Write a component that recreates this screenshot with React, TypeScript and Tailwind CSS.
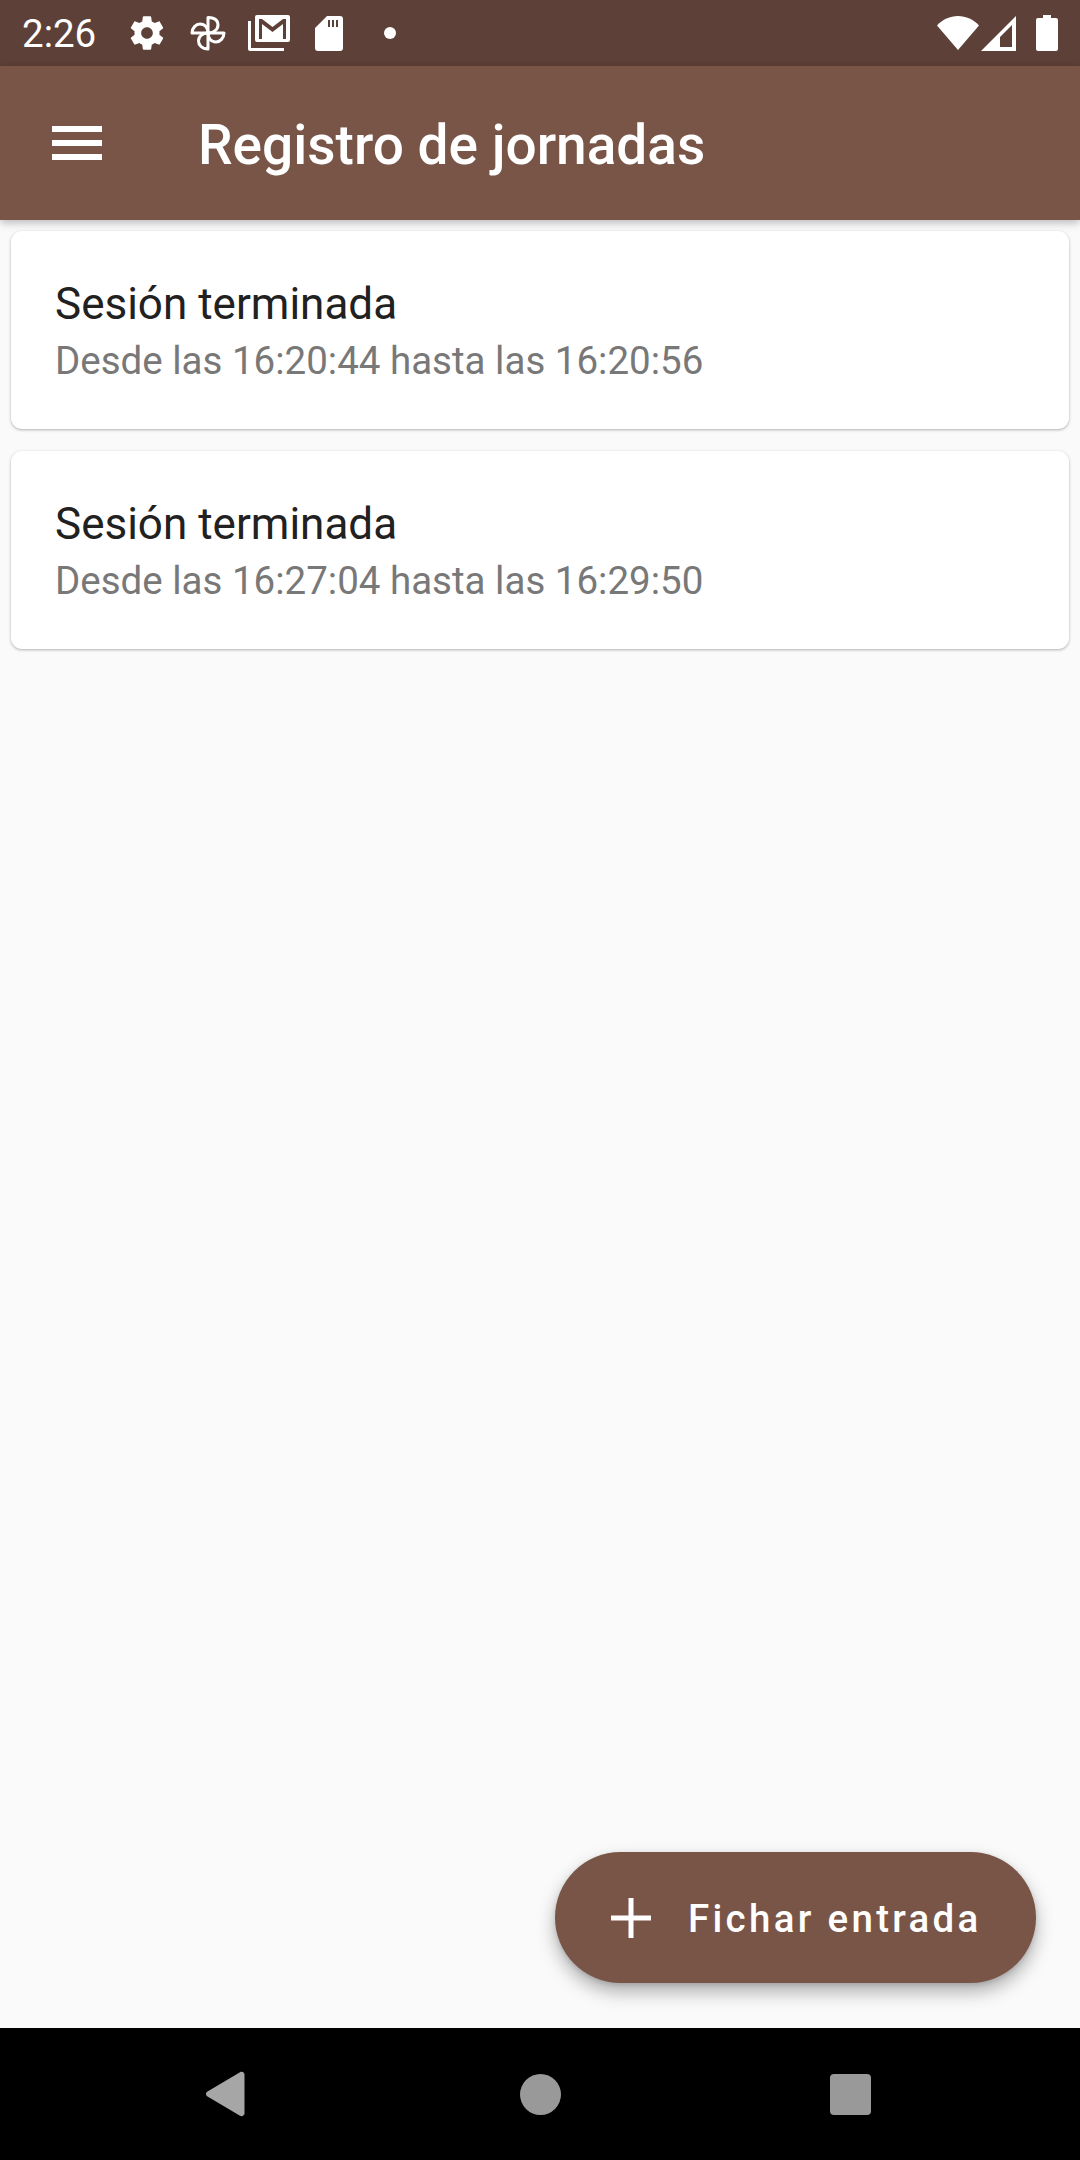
import React from "react";

const roboto = "font-['Roboto',sans-serif]";

function Gear() {
  return (
    <svg width="40" height="40" viewBox="0 0 24 24" fill="#fff" className="shrink-0">
      <path fillRule="evenodd" d="M19.43 12.98c.04-.32.07-.64.07-.98s-.03-.66-.07-.98l2.11-1.65c.19-.15.24-.42.12-.64l-2-3.46c-.12-.22-.39-.3-.61-.22l-2.49 1c-.52-.4-1.08-.73-1.69-.98l-.38-2.65C14.46 2.18 14.25 2 14 2h-4c-.25 0-.46.18-.49.42l-.38 2.65c-.61.25-1.17.59-1.69.98l-2.49-1c-.23-.09-.49 0-.61.22l-2 3.46c-.13.22-.07.49.12.64l2.11 1.65c-.04.32-.07.65-.07.98s.03.66.07.98l-2.11 1.65c-.19.15-.24.42-.12.64l2 3.46c.12.22.39.3.61.22l2.49-1c.52.4 1.08.73 1.69.98l.38 2.65c.03.24.24.42.49.42h4c.25 0 .46-.18.49-.42l.38-2.65c.61-.25 1.17-.59 1.69-.98l2.49 1c.23.09.49 0 .61-.22l2-3.46c.12-.22.07-.49-.12-.64l-2.11-1.65zM12 15.500c-1.93 0-3.5-1.57-3.5-3.5s1.57-3.5 3.5-3.5 3.5 1.57 3.5 3.5-1.57 3.5-3.5 3.5z" />
    </svg>
  );
}

function Fan() {
  return (
    <svg width="36" height="36" viewBox="0 0 36 36" fill="none" stroke="#fff" strokeWidth="3" strokeLinejoin="round" className="shrink-0">
      <path d="M18 18V2.500C18 2.500 28 2 28 10C28 15 23 18 18 18Z" />
      <path d="M18 18H34C34 23 30 27 26 27C21 27 18 23 18 18Z" />
      <path d="M18 18V34C12 34 8.500 30 8.500 26C8.500 21 13 18 18 18Z" />
      <path d="M18 18H2C2 13 6 9 10 9C15 9 18 13 18 18Z" />
    </svg>
  );
}

function Gmail() {
  return (
    <svg width="42" height="36" viewBox="0 0 42 36" className="shrink-0">
      <path d="M0 6h3v27h33v3H2a2 2 0 0 1-2-2Z" fill="#fff" />
      <path fillRule="evenodd" d="M9 0h31a2 2 0 0 1 2 2v23a2 2 0 0 1-2 2H9a2 2 0 0 1-2-2V2a2 2 0 0 1 2-2Zm2 4v20h3V9l10.500 8L35 9v15h3V4h-3L24.500 12 14 4Z" fill="#fff" />
    </svg>
  );
}

function Sd() {
  return (
    <svg width="28" height="35" viewBox="0 0 28 35" className="shrink-0">
      <path fillRule="evenodd" d="M12 0h13a3 3 0 0 1 3 3v29a3 3 0 0 1-3 3H3a3 3 0 0 1-3-3V12ZM13 4v7h2V4Zm4 0v7h2V4Zm4 0v7h2V4Z" fill="#fff" />
    </svg>
  );
}

function Wifi() {
  return (
    <svg width="42" height="34" viewBox="0 0 42 34" className="shrink-0">
      <path d="M0 9.500C5.500 3.500 13 0 21 0s15.500 3.500 21 9.500L21 34Z" fill="#fff" />
    </svg>
  );
}

function Signal() {
  return (
    <svg width="35" height="35" viewBox="0 0 35 35" className="shrink-0">
      <path fillRule="evenodd" d="M35 0v35H0ZM32 8 19 21v10h13Z" fill="#fff" />
      <path d="M32 7.500V31h-1V8.500Z" fill="#fff" />
    </svg>
  );
}

function Battery() {
  return (
    <svg width="22" height="36" viewBox="0 0 22 36" className="shrink-0">
      <path d="M7 0h8v3h5a2 2 0 0 1 2 2v29a2 2 0 0 1-2 2H2a2 2 0 0 1-2-2V5a2 2 0 0 1 2-2h5Z" fill="#fff" />
    </svg>
  );
}

function Card({ range }: { range: string }) {
  return (
    <div className="h-[198px] rounded-[11px] bg-white px-[44px] pt-[44px] shadow-[0_1px_3px_rgba(0,0,0,0.3)]">
      <div className="h-[60px] text-[44px] leading-[58px] text-[#212121]">Sesión terminada</div>
      <div className="h-[52px] text-[38.500px] leading-[52px] text-[#787878]">{range}</div>
    </div>
  );
}

export default function App() {
  return (
    <div className={`${roboto} flex h-[2160px] w-[1080px] flex-col overflow-hidden bg-[#fafafa]`}>
      <div className="flex h-[66px] shrink-0 items-center bg-[#5d4037] pl-[22px] pr-[22px] text-white">
        <span className="mt-[1px] w-[105px] text-[38.500px] leading-[66px]">2:26</span>
        <Gear />
        <span className="w-[23px]" />
        <Fan />
        <span className="w-[22px]" />
        <Gmail />
        <span className="w-[25px]" />
        <Sd />
        <span className="ml-[41px] h-[12px] w-[12px] rounded-full bg-white" />
        <div className="ml-auto flex items-center">
          <Wifi />
          <span className="w-[2px]" />
          <Signal />
          <span className="w-[20px]" />
          <Battery />
        </div>
      </div>

      <header className="z-10 flex h-[154px] shrink-0 items-center bg-[#795548] pl-[52px] shadow-[0_3px_8px_rgba(0,0,0,0.25)]">
        <div className="flex h-[34px] w-[50px] flex-col justify-between">
          <div className="h-[6px] bg-white" />
          <div className="h-[6px] bg-white" />
          <div className="h-[6px] bg-white" />
        </div>
        <h1 className="ml-[96px] mt-[3px] text-[55px] font-medium leading-[60px] text-white">Registro de jornadas</h1>
      </header>

      <main className="flex min-h-0 flex-1 flex-col px-[11px] pt-[11px]">
        <div className="flex flex-col gap-[22px]">
          <Card range="Desde las 16:20:44 hasta las 16:20:56" />
          <Card range="Desde las 16:27:04 hasta las 16:29:50" />
        </div>
        <div className="mt-auto mb-[45px] mr-[33px] flex h-[131px] w-[481px] items-center self-end rounded-full bg-[#795548] pl-[56px] shadow-[0_9px_18px_rgba(0,0,0,0.3),0_2px_5px_rgba(0,0,0,0.12)]">
          <svg width="40" height="40" viewBox="0 0 40 40" className="shrink-0">
            <path d="M17.500 0h5v17.500H40v5H22.500V40h-5V22.500H0v-5h17.500Z" fill="#fff" />
          </svg>
          <span className="ml-[37px] mt-[2px] text-[38.500px] font-medium leading-[46px] tracking-[3.3px] text-white">Fichar entrada</span>
        </div>
      </main>

      <nav className="flex h-[132px] shrink-0 items-center bg-black pl-[206px]">
        <svg width="40" height="46" viewBox="0 0 40 46" className="shrink-0">
          <path d="M1.500 20.500 34 1.200c2-1.100 4.500.2 4.500 2.500v38.600c0 2.300-2.500 3.600-4.500 2.500L1.500 25.500c-2-1.100-2-3.900 0-5Z" fill="#a6a6a6" />
        </svg>
        <span className="ml-[274px] h-[41px] w-[41px] rounded-full bg-[#999999]" />
        <span className="ml-[269px] h-[41px] w-[41px] rounded-[4px] bg-[#999999]" />
      </nav>
    </div>
  );
}
